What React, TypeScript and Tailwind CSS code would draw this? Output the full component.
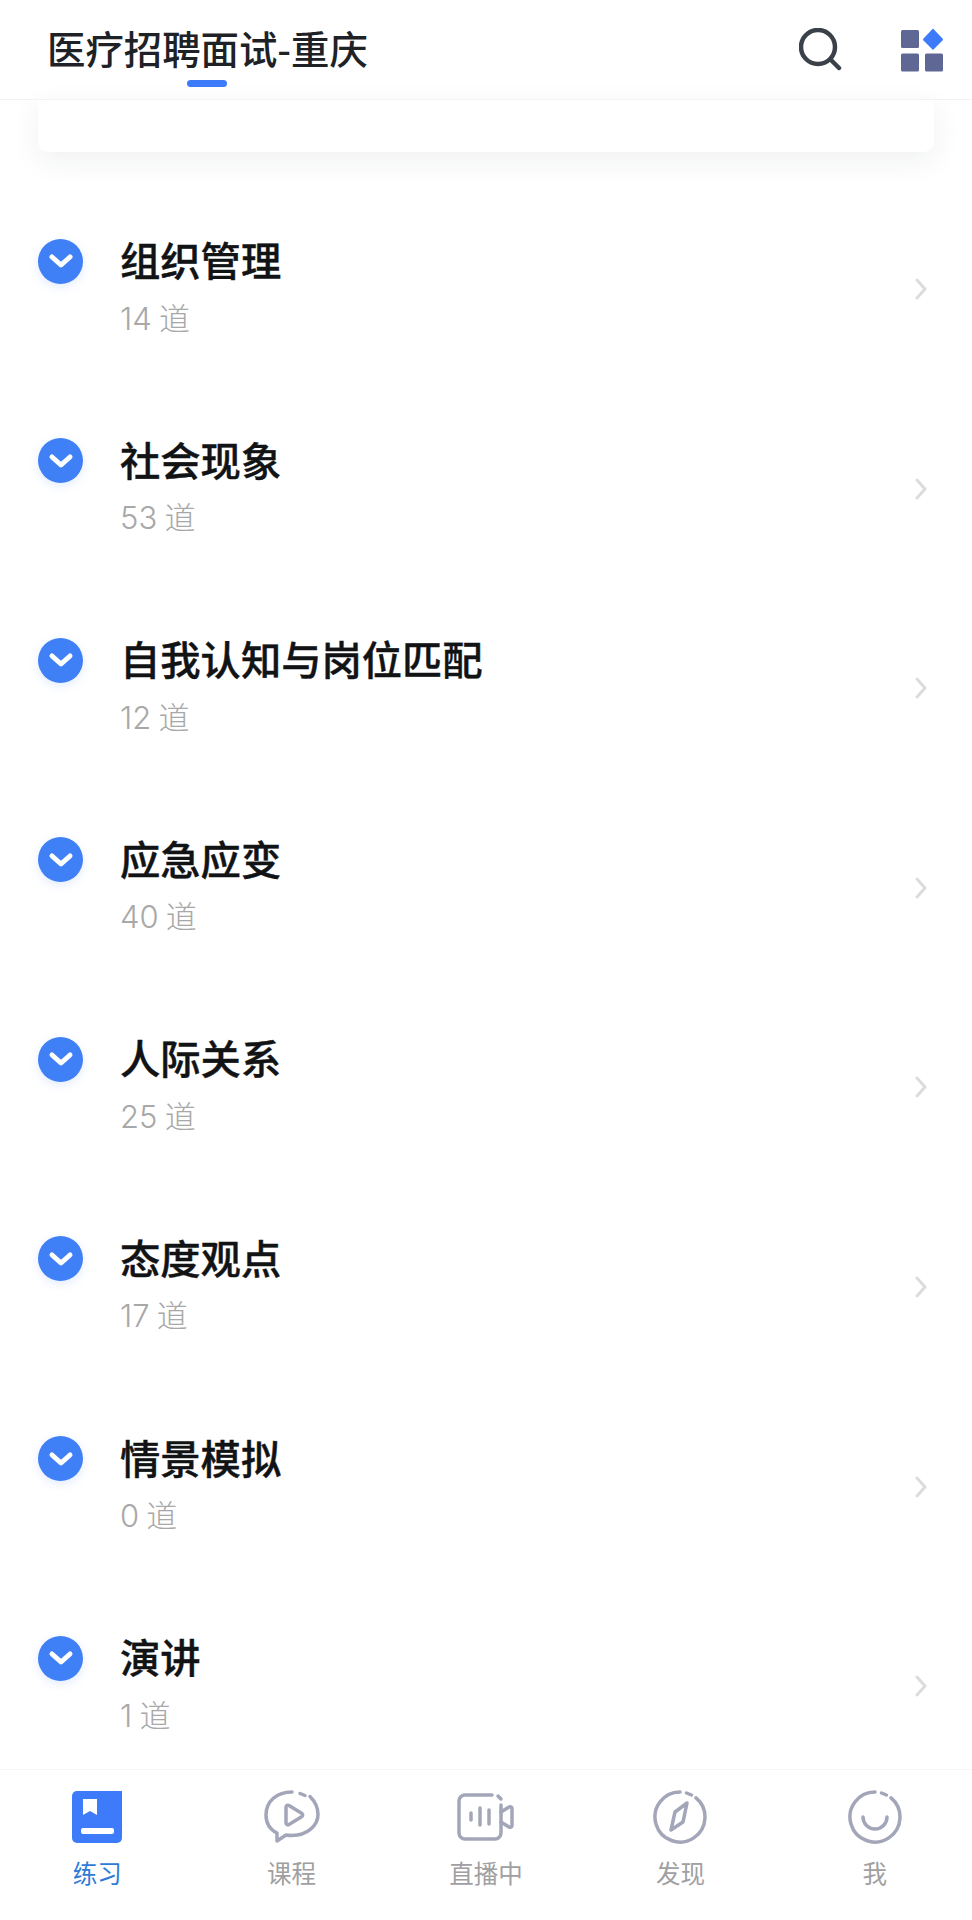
import React from 'react';

const items = [
  { title: '组织管理', count: '14 道' },
  { title: '社会现象', count: '53 道' },
  { title: '自我认知与岗位匹配', count: '12 道' },
  { title: '应急应变', count: '40 道' },
  { title: '人际关系', count: '25 道' },
  { title: '态度观点', count: '17 道' },
  { title: '情景模拟', count: '0 道' },
  { title: '演讲', count: '1 道' },
];

function SearchIcon() {
  return (
    <svg width="43" height="43" viewBox="0 0 43 43" fill="none" stroke="#3a4148" strokeWidth="4.500" strokeLinecap="round">
      <circle cx="19" cy="19" r="17" />
      <path d="M32 32l8 8" />
    </svg>
  );
}

function GridIcon() {
  return (
    <svg width="43" height="44" viewBox="0 0 43 44">
      <rect x="0" y="2" width="18" height="18" rx="1.500" fill="#5f6894" />
      <rect x="0" y="25.500" width="18" height="18" rx="1.500" fill="#5f6894" />
      <rect x="24" y="25.500" width="18" height="18" rx="1.500" fill="#5f6894" />
      <path d="M32 0.500l9.500 10a1.500 1.500 0 0 1 0 2L32 22 22.500 12.500a1.500 1.500 0 0 1 0-2z" fill="#3d7bfb" />
    </svg>
  );
}

function BookIcon() {
  return (
    <svg width="50" height="54" viewBox="0 0 50 54">
      <path d="M5 1h45v47a5 5 0 0 1-5 5H5a5 5 0 0 1-5-5V6a5 5 0 0 1 5-5z" fill="#3d7bfb" />
      <path d="M11 9h14v16l-7-4-7 4z" fill="#fff" />
      <rect x="9" y="38" width="33" height="6" rx="2" fill="#fff" />
    </svg>
  );
}

function CourseIcon() {
  return (
    <svg width="56" height="54" viewBox="0 0 56 54" fill="none" stroke="#a3a6b8" strokeWidth="3.500" strokeLinecap="round" strokeLinejoin="round">
      <path d="M28 2C13 2 2 11 2 25c0 9 5 15 11 18v8l9-6c2 .4 4 .5 6 .5 15 0 26-10 26-21 0-7-3-13-8-18" />
      <path d="M36 3.500l5 2" />
      <path d="M22 17v16a2 2 0 0 0 3 1.500l13-8a2 2 0 0 0 0-3l-13-8a2 2 0 0 0-3 1.500z" />
    </svg>
  );
}

function LiveIcon() {
  return (
    <svg width="58" height="48" viewBox="0 0 58 48" fill="none" stroke="#a3a6b8" strokeWidth="3.500" strokeLinecap="round" strokeLinejoin="round">
      <path d="M35 2H8a6 6 0 0 0-6 6v32a6 6 0 0 0 6 6h30a6 6 0 0 0 6-6V12" />
      <path d="M41 3l3 3" />
      <path d="M14 20v7M23 15v17M32 17v14" />
      <path d="M44 19l8-5a2 2 0 0 1 3 2v16a2 2 0 0 1-3 2l-8-5" />
    </svg>
  );
}

function CompassIcon() {
  return (
    <svg width="54" height="54" viewBox="0 0 54 54" fill="none" stroke="#a3a6b8" strokeWidth="3.500" strokeLinecap="round" strokeLinejoin="round">
      <path d="M27 2a25 25 0 1 0 16 5.800" />
      <path d="M33.500 3l5 2" />
      <path d="M34 13l-12 9-4 18 12-8z" />
    </svg>
  );
}

function SmileIcon() {
  return (
    <svg width="54" height="54" viewBox="0 0 54 54" fill="none" stroke="#a3a6b8" strokeWidth="3.500" strokeLinecap="round" strokeLinejoin="round">
      <path d="M27 2a25 25 0 1 0 16 5.800" />
      <path d="M33.500 3l5 2" />
      <path d="M15 27a12 12 0 0 0 24 0" />
    </svg>
  );
}

const tabs = [
  { label: '练习', icon: <BookIcon />, active: true },
  { label: '课程', icon: <CourseIcon /> },
  { label: '直播中', icon: <LiveIcon /> },
  { label: '发现', icon: <CompassIcon /> },
  { label: '我', icon: <SmileIcon /> },
];

export default function App() {
  return (
    <div className="flex h-[1920px] w-[972px] flex-col overflow-hidden bg-white font-['Noto_Sans_CJK_SC','Noto_Sans',sans-serif]">
      <header className="relative flex h-[100px] shrink-0 items-center justify-between border-b border-[#f1f2f4] pl-[47px] pr-[28px]">
        <h1 className="relative mb-[5px] text-[38.400px] font-medium leading-[50px] text-[#1e2226]">
          医疗招聘面试-重庆
          <span className="absolute left-[140px] top-[58px] h-[7px] w-[40px] rounded-full bg-[#3d7bfb]" />
        </h1>
        <div className="flex items-center gap-[59px]">
          <SearchIcon />
          <GridIcon />
        </div>
      </header>

      <main className="flex min-h-0 flex-1 flex-col">
        <div className="mx-[38px] h-[52px] shrink-0 rounded-b-[10px] bg-white shadow-[0_8px_30px_rgba(30,40,60,0.07)]" />
        <ul className="mt-[84px] flex flex-col gap-[93.6px] pl-[38px] pr-[45px]">
          {items.map((item) => (
            <li key={item.title} className="flex h-[106px] items-center">
              <span className="mb-[56px] flex h-[45px] w-[45px] shrink-0 items-center justify-center rounded-full bg-[#4080f6] shadow-[0_3px_10px_rgba(61,123,251,0.15)]">
                <svg width="28" height="20" viewBox="0 0 28 20" fill="none" stroke="#fff" strokeWidth="5" strokeLinecap="round" strokeLinejoin="round">
                  <path d="M5 6l9 8 9-8" />
                </svg>
              </span>
              <div className="ml-[37px] flex-1 self-start">
                <div className="text-[40.300px] font-medium leading-[46px] text-[#111315] [-webkit-text-stroke:0.4px_#111315]">{item.title}</div>
                <div className="mt-[14.500px] font-['Inter','Noto_Sans_CJK_SC',sans-serif] text-[31px] font-light leading-[44px] text-[#a8a8a8] [word-spacing:-1.500px]">{item.count}</div>
              </div>
              <svg width="12" height="22" viewBox="0 0 12 22" fill="none" stroke="#dcdcde" strokeWidth="3" strokeLinecap="round" strokeLinejoin="round">
                <path d="M2 2l8 9-8 9" />
              </svg>
            </li>
          ))}
        </ul>
      </main>

      <nav className="flex h-[151px] shrink-0 border-t border-[#f5f6f7] bg-white">
        {tabs.map((tab) => (
          <div key={tab.label} className="flex flex-1 flex-col items-center pt-[20px]">
            <div className="flex h-[54px] items-center justify-center">{tab.icon}</div>
            <span className={`mt-[12px] text-[24.500px] leading-[34px] ${tab.active ? 'text-[#2f7bd8]' : 'text-[#a0a0a2]'}`}>
              {tab.label}
            </span>
          </div>
        ))}
      </nav>
    </div>
  );
}
